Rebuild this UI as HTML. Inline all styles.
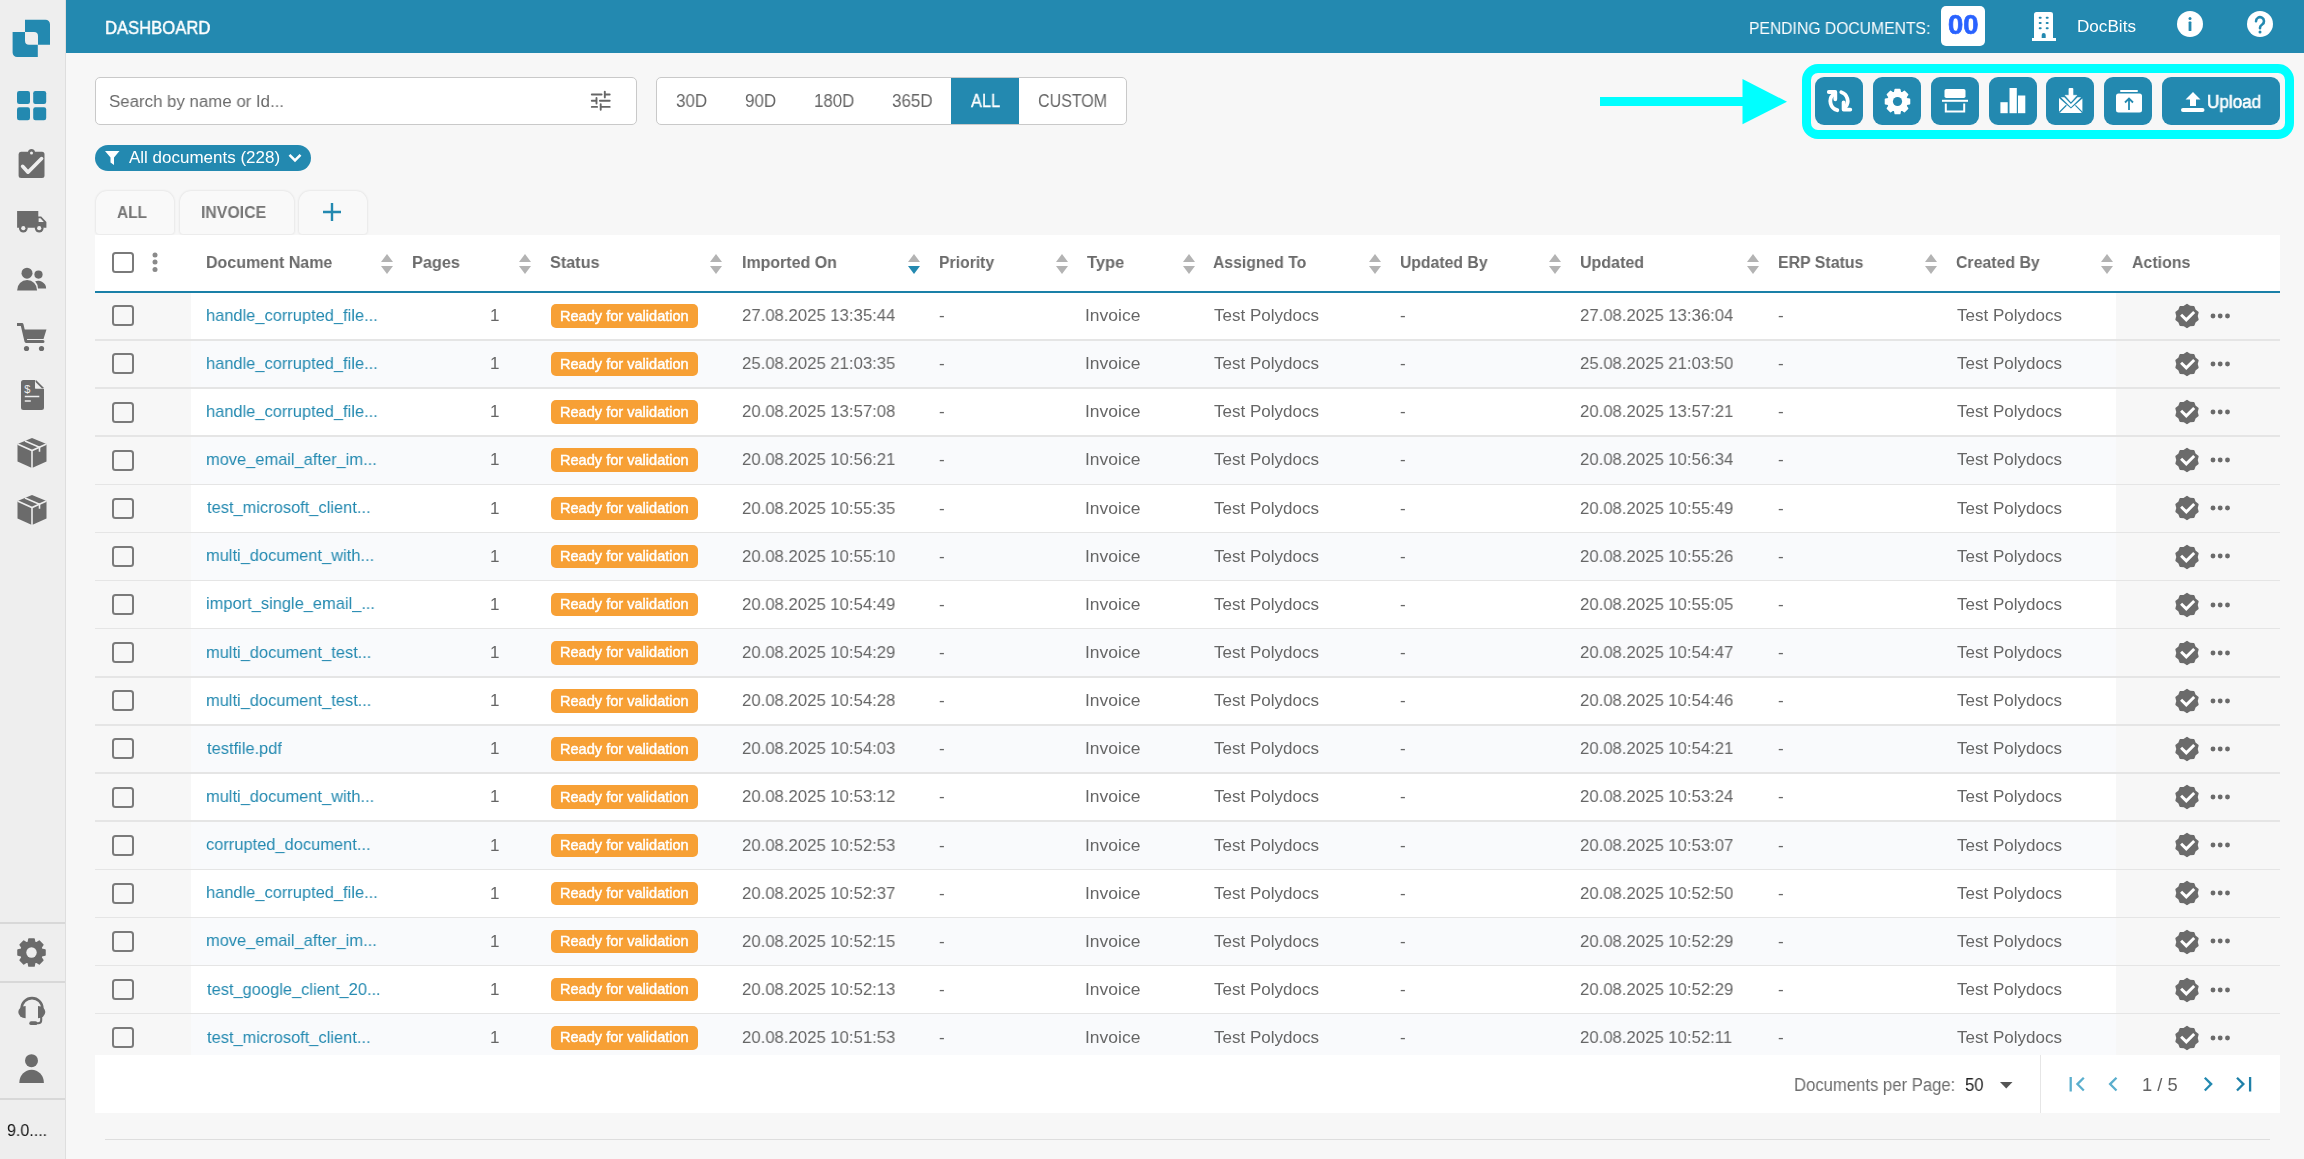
<!DOCTYPE html><html><head><meta charset="utf-8"><style>
*{box-sizing:border-box;margin:0;padding:0}
html,body{width:2304px;height:1159px;overflow:hidden;background:#f7f7f7;font-family:"Liberation Sans",sans-serif;color:#666666}
.a{position:absolute}
.t{position:absolute;white-space:nowrap;line-height:1;transform-origin:0 0;will-change:transform}
svg{position:absolute;display:block}
#side{left:0;top:0;width:66px;height:1159px;background:#eeeeee;border-right:1px solid #dedede}
.hr{left:0;width:65px;height:2px;background:#d8d8d8}
#hdr{left:66px;top:0;width:2238px;height:53px;background:#2389b0}
.box{background:#fff;border:1.5px solid #c9c9c9;border-radius:5px}
.seg{font-size:17px;color:#666666}
.tab{background:#f9f9f9;border-radius:11px 11px 3px 3px;box-shadow:0 0 2.5px rgba(0,0,0,0.14)}
.th{font-size:16.5px;font-weight:700;color:#666666}
.td{font-size:17px;color:#666666}
.lnk{font-size:17px;color:#2389b0}
.badge{background:#f7a035;border-radius:5px;height:23.5px;width:147px}
.bt{font-size:14.5px;font-weight:700;color:#fff;letter-spacing:-0.3px}
.cb{width:21.5px;height:21px;border:2px solid #7a7a7a;border-radius:3.5px}
.tb{background:#2389b0;border-radius:9px;height:48px}
</style></head><body>
<div id="side" class="a"></div>
<svg style="left:0;top:0" width="66" height="70" viewBox="0 0 66 70">
<path fill="#2389b0" d="M25 19.7h20.5a4.5 4.5 0 0 1 4.5 4.5V44.7H38V36a4 4 0 0 0-4-4H25z"/>
<path fill="#2389b0" d="M12.6 32H25v8.7a4 4 0 0 0 4 4h8.8V57H17.1a4.5 4.5 0 0 1-4.5-4.5z"/>
</svg>
<svg style="left:16.8px;top:91.1px" width="30" height="30" viewBox="0 0 30 30" fill="#2389b0">
<rect x="0" y="0" width="13" height="13" rx="2.2"/><rect x="16.2" y="0" width="13" height="13" rx="2.2"/>
<rect x="0" y="16.2" width="13" height="13" rx="2.2"/><rect x="16.2" y="16.2" width="13" height="13" rx="2.2"/></svg>
<svg style="left:18px;top:148px" width="28" height="32" viewBox="0 0 28 32" fill="#6b6b6b">
<path d="M3 3.7h7a3.6 3.6 0 0 1 7 0h7a2.5 2.5 0 0 1 2.5 2.5v21.3A2.5 2.5 0 0 1 24 30H3.1A2.5 2.5 0 0 1 .6 27.5V6.2A2.5 2.5 0 0 1 3 3.7z"/>
<circle cx="13.5" cy="5" r="1.5" fill="#eeeeee"/>
<path d="M4.6 18.3l5.4 5.9 13.6-13.6" stroke="#eeeeee" stroke-width="3.6" fill="none" stroke-linecap="round" stroke-linejoin="round"/></svg>
<svg style="left:16.8px;top:210px" width="30" height="24" viewBox="0 0 30 24" fill="#6b6b6b">
<path d="M0.1 1H21.3V6.4h2.9l5.2 5.6V17.8H0.1z"/>
<path d="M21.6 8.3v3.6h5.2l-3.3-3.6z" fill="#eeeeee"/>
<circle cx="6.3" cy="18.2" r="4.3"/><circle cx="22.2" cy="18.2" r="4.3"/>
<circle cx="6.3" cy="18.2" r="2.1" fill="#eeeeee"/><circle cx="22.2" cy="18.2" r="2.1" fill="#eeeeee"/></svg>
<svg style="left:16.8px;top:267px" width="30" height="25" viewBox="0 0 30 25" fill="#6b6b6b">
<circle cx="10" cy="6.2" r="5.5"/><path d="M0.1 23.4a10 10.3 0 0 1 20 0z"/>
<circle cx="21.5" cy="7.6" r="4.1"/><path d="M18.2 14.3a8 7.5 0 0 1 10.9 7.1H21a11.5 11.5 0 0 0-2.8-7.1z"/></svg>
<svg style="left:16.9px;top:323px" width="30" height="29" viewBox="0 0 30 29" fill="#6b6b6b">
<path d="M0 1.5h5l4 17h17" stroke="#6b6b6b" stroke-width="3" fill="none" stroke-linejoin="round" stroke-linecap="round"/>
<path d="M6.8 6.5h22.7l-3 9.5H9z"/>
<circle cx="9.5" cy="25.5" r="2.6"/><circle cx="24.5" cy="25.5" r="2.6"/></svg>
<svg style="left:20.5px;top:379.5px" width="23" height="30" viewBox="0 0 23 30" fill="#6b6b6b">
<path d="M2.5 0h11.5l9 9v18.5a2.5 2.5 0 0 1-2.5 2.5H2.5A2.5 2.5 0 0 1 0 27.5v-25A2.5 2.5 0 0 1 2.5 0z"/>
<path d="M14.5 0v8.5H23z" fill="#eeeeee"/><path d="M15 0l8 8h-8z" fill="#6b6b6b"/>
<path d="M14 1.5v7h7" fill="#eeeeee"/>
<path d="M3.8 16.5h14.5M3.8 21h6" stroke="#eeeeee" stroke-width="1.6"/>
<text x="3.3" y="12.5" font-size="11" font-family="Liberation Sans" fill="#eeeeee">$</text></svg>
<svg style="left:16.9px;top:437.5px" width="30" height="30" viewBox="0 0 30 30" fill="#6b6b6b">
<path d="M15 0l14.5 6v17.5L15 30 .5 23.5V6z"/>
<path d="M.5 6L15 12.5 29.5 6M15 12.5V30" stroke="#eeeeee" stroke-width="1.6" fill="none"/>
<path d="M8 3l14.5 6.3v4.5" stroke="#eeeeee" stroke-width="1.6" fill="none"/></svg>
<svg style="left:16.9px;top:495.3px" width="30" height="30" viewBox="0 0 30 30" fill="#6b6b6b">
<path d="M15 0l14.5 6v17.5L15 30 .5 23.5V6z"/>
<path d="M.5 6L15 12.5 29.5 6M15 12.5V30" stroke="#eeeeee" stroke-width="1.6" fill="none"/>
<path d="M8 3l14.5 6.3v4.5" stroke="#eeeeee" stroke-width="1.6" fill="none"/></svg>
<div class="a hr" style="top:921.5px"></div><div class="a hr" style="top:980.5px"></div><div class="a hr" style="top:1097.5px"></div>
<svg style="left:16px;top:936.5px" width="31" height="31" viewBox="0 0 31 31"><path fill="#6b6b6b" stroke="#6b6b6b" stroke-width="1.4" stroke-linejoin="round" d="M25.76 12.25 L29.05 12.89 L29.05 18.11 L25.76 18.75 L25.44 19.62 L25.05 20.46 L26.92 23.24 L23.24 26.92 L20.46 25.05 L19.62 25.44 L18.75 25.76 L18.11 29.05 L12.89 29.05 L12.25 25.76 L11.38 25.44 L10.54 25.05 L7.76 26.92 L4.08 23.24 L5.95 20.46 L5.56 19.62 L5.24 18.75 L1.95 18.11 L1.95 12.89 L5.24 12.25 L5.56 11.38 L5.95 10.54 L4.08 7.76 L7.76 4.08 L10.54 5.95 L11.38 5.56 L12.25 5.24 L12.89 1.95 L18.11 1.95 L18.75 5.24 L19.62 5.56 L20.46 5.95 L23.24 4.08 L26.92 7.76 L25.05 10.54 L25.44 11.38Z"/><circle cx="15.5" cy="15.5" r="5.2" fill="#eeeeee"/></svg>
<svg style="left:12px;top:990px" width="40" height="100" viewBox="12 990 40 100" fill="#6b6b6b">
<path d="M21.6 1008.5A10.4 10.4 0 0 1 42.4 1008.5V1010M21.6 1008.5V1010" stroke="#6b6b6b" stroke-width="2.6" fill="none"/>
<path d="M25.6 1006V1018.2A7.3 6.1 0 0 1 25.6 1006z"/>
<path d="M38 1006V1018.2A7.3 6.1 0 0 0 38 1006z"/>
<path d="M41.2 1016.5V1020.3Q41.2 1023.3 38.2 1023.3H35" stroke="#6b6b6b" stroke-width="2.1" fill="none"/>
<path d="M31.2 1023.2H35.5" stroke="#6b6b6b" stroke-width="3.8" stroke-linecap="round"/>
<circle cx="31.5" cy="1060.7" r="6.5"/>
<path d="M19.3 1083A12.3 13.3 0 0 1 43.9 1083z"/>
</svg>
<div class="t" style="left:6.94px;top:1122.80px;font-size:16.8px;font-weight:400;color:#111;transform:scaleX(0.9564);">9.0....</div>
<div id="hdr" class="a"></div>
<div class="t" style="left:105.10px;top:19.30px;font-size:18.4px;font-weight:400;color:#fff;transform:scaleX(0.9043);-webkit-text-stroke:0.45px #fff">DASHBOARD</div>
<div class="t" style="left:1748.75px;top:20.90px;font-size:16.6px;font-weight:400;color:#fff;transform:scaleX(0.9455);">PENDING DOCUMENTS:</div>
<div class="a" style="left:1941px;top:6px;width:44px;height:40px;background:#fff;border-radius:5px"></div>
<div class="t" style="left:1947.79px;top:11.60px;font-size:27px;font-weight:700;color:#2962ff;transform:scaleX(1.0143);-webkit-text-stroke:0.7px #2962ff">00</div>
<svg style="left:2032px;top:12px" width="24" height="29" viewBox="0 0 24 29" fill="#fff">
<path d="M4.5 0h14a2.5 2.5 0 0 1 2.5 2.5V26h3v3H0v-3h2V2.5A2.5 2.5 0 0 1 4.5 0z"/>
<g fill="#2389b0"><rect x="6.7" y="4.8" width="3" height="2" rx="1"/><rect x="13.7" y="4.8" width="3" height="2" rx="1"/>
<rect x="6.7" y="10" width="3" height="2" rx="1"/><rect x="13.7" y="10" width="3" height="2" rx="1"/>
<rect x="6.7" y="15.2" width="3" height="2" rx="1"/><rect x="13.7" y="15.2" width="3" height="2" rx="1"/>
<path d="M9.7 26v-3a2 2 0 0 1 4 0v3z"/></g></svg>
<div class="t" style="left:2077.48px;top:19.30px;font-size:16.8px;font-weight:400;color:#fff;transform:scaleX(1.0196);">DocBits</div>
<svg style="left:2177px;top:11px" width="26" height="26" viewBox="0 0 26 26"><circle cx="13" cy="13" r="13" fill="#fff"/>
<circle cx="13" cy="7.6" r="1.5" fill="#2389b0"/><rect x="11.6" y="10.6" width="2.8" height="9.4" rx="0.6" fill="#2389b0"/></svg>
<svg style="left:2246.5px;top:11px" width="26" height="26" viewBox="0 0 26 26"><circle cx="13" cy="13" r="13" fill="#fff"/>
<path d="M9 10.2a4 4 0 1 1 6.2 3.3c-1.2.8-2.2 1.6-2.2 3.2v.6" stroke="#2389b0" stroke-width="2.6" fill="none" stroke-linecap="round"/>
<circle cx="13" cy="21" r="1.5" fill="#2389b0"/></svg>
<div class="a box" style="left:95px;top:77px;width:542px;height:48px"></div>
<div class="t" style="left:109.03px;top:92.60px;font-size:17.3px;font-weight:400;color:#6a6a6a;transform:scaleX(0.9746);">Search by name or Id...</div>
<svg style="left:580px;top:85px" width="40" height="33" viewBox="580 85 40 33" fill="none" stroke="#666" stroke-width="1.9" stroke-linecap="round">
<path d="M591.8 94.5H601.6M604.8 91.6V97.4M604.8 94.5H609.7M591.8 100.7H596.4M596.5 97.9V103.6M599.9 100.7H609.7M591.8 106.9H597.1M600.7 104.2V109.7M600.7 106.9H609.7"/></svg>
<div class="a box" style="left:656px;top:77px;width:471px;height:48px"></div>
<div class="a" style="left:951px;top:78px;width:68px;height:46px;background:#2389b0"></div>
<div class="t" style="left:676.03px;top:93.30px;font-size:17.6px;font-weight:400;color:#666666;transform:scaleX(0.9667);">30D</div>
<div class="t" style="left:744.83px;top:93.30px;font-size:17.6px;font-weight:400;color:#666666;transform:scaleX(0.9667);">90D</div>
<div class="t" style="left:813.64px;top:93.30px;font-size:17.6px;font-weight:400;color:#666666;transform:scaleX(0.9600);">180D</div>
<div class="t" style="left:891.73px;top:93.30px;font-size:17.6px;font-weight:400;color:#666666;transform:scaleX(0.9675);">365D</div>
<div class="t" style="left:970.80px;top:93.30px;font-size:17.6px;font-weight:400;color:#fff;transform:scaleX(0.9323);-webkit-text-stroke:0.3px #fff">ALL</div>
<div class="t" style="left:1038.09px;top:93.30px;font-size:17.6px;font-weight:400;color:#666666;transform:scaleX(0.9095);">CUSTOM</div>
<div class="a" style="left:95px;top:144.5px;width:216px;height:26px;background:#2389b0;border-radius:13px"></div>
<svg style="left:104.5px;top:151px" width="15" height="14" viewBox="0 0 15 14" fill="#fff"><path d="M0 0h14.5L9 6.5V14L5.5 11.5V6.5z"/></svg>
<div class="t" style="left:129.20px;top:150.30px;font-size:16.6px;font-weight:400;color:#fff;transform:scaleX(1.0238);">All documents (228)</div>
<svg style="left:287.5px;top:153px" width="14" height="10" viewBox="0 0 14 10"><path d="M1.5 1.8l5.5 5.5 5.5-5.5" stroke="#fff" stroke-width="2.6" fill="none"/></svg>
<div class="a" style="left:1599.5px;top:97.3px;width:146px;height:9px;background:#00ffff"></div>
<svg style="left:1742px;top:79px" width="46" height="46" viewBox="0 0 46 46"><path d="M0.5 0L45 22.7 0.5 45.3z" fill="#00ffff"/></svg>
<div class="a" style="left:1802px;top:63.5px;width:492px;height:75.5px;border:9px solid #00ffff;border-radius:16px"></div>
<div class="a tb" style="left:1815.2px;top:77px;width:48px"></div>
<div class="a tb" style="left:1873px;top:77px;width:48px"></div>
<div class="a tb" style="left:1930.8px;top:77px;width:48px"></div>
<div class="a tb" style="left:1988.7px;top:77px;width:48px"></div>
<div class="a tb" style="left:2046.4px;top:77px;width:48px"></div>
<div class="a tb" style="left:2104px;top:77px;width:48px"></div>
<div class="a tb" style="left:2162px;top:77px;width:118px"></div>
<svg style="left:1815.2px;top:77px" width="48" height="48" viewBox="0 0 48 48" fill="none" stroke="#fff" stroke-width="3.8" stroke-linecap="round" stroke-linejoin="round">
<path d="M18.2 17.5A9.3 9.3 0 0 0 22.3 33.2"/><path d="M13.8 15H20.3V22.3"/>
<path d="M26.3 15.2A9.3 9.3 0 0 1 30.5 30"/><path d="M28.6 25.3V32.6H35.3"/></svg>
<svg style="left:1884px;top:87.5px" width="27" height="27" viewBox="0 0 27 27"><path fill="#fff" stroke="#fff" stroke-width="1.4" stroke-linejoin="round" d="M22.65 10.61 L25.58 11.18 L25.58 15.82 L22.65 16.39 L22.36 17.17 L22.01 17.92 L23.68 20.40 L20.40 23.68 L17.92 22.01 L17.17 22.36 L16.39 22.65 L15.82 25.58 L11.18 25.58 L10.61 22.65 L9.83 22.36 L9.08 22.01 L6.60 23.68 L3.32 20.40 L4.99 17.92 L4.64 17.17 L4.35 16.39 L1.42 15.82 L1.42 11.18 L4.35 10.61 L4.64 9.83 L4.99 9.08 L3.32 6.60 L6.60 3.32 L9.08 4.99 L9.83 4.64 L10.61 4.35 L11.18 1.42 L15.82 1.42 L16.39 4.35 L17.17 4.64 L17.92 4.99 L20.40 3.32 L23.68 6.60 L22.01 9.08 L22.36 9.83Z"/><circle cx="13.5" cy="13.5" r="4.6" fill="#2389b0"/></svg>
<svg style="left:1942px;top:89px" width="26" height="24" viewBox="0 0 26 24">
<rect x="2.5" y="0" width="21" height="9" rx="1.8" fill="#fff"/><rect x="0" y="10.8" width="26" height="2" fill="#fff"/>
<path d="M3.8 14.5v8h18.4v-8" stroke="#fff" stroke-width="2" fill="none"/></svg>
<svg style="left:2000px;top:88px" width="26" height="26" viewBox="0 0 26 26" fill="#fff">
<rect x="0.4" y="14.2" width="7.3" height="11" /><rect x="9.5" y="0" width="7.3" height="25.2"/><rect x="18" y="7.5" width="7.3" height="17.7"/></svg>
<svg style="left:2052px;top:84px" width="38" height="34" viewBox="0 0 38 34" fill="#fff">
<rect x="16.6" y="4.1" width="4.7" height="8" rx="1"/>
<path d="M13.1 11.3H24.8L18.95 17.9z" stroke="#fff" stroke-width="0.6" stroke-linejoin="round"/>
<path d="M8.8 13.2H12.3L18.95 19.95 25.6 13.2H29.1L18.95 23.3z"/>
<path d="M7 14.1L18.95 24.4 30.4 14.6V27.9L29 29H8.8L7 27.9z"/>
<path d="M14.4 21.3L7.4 28.2M23.4 21.3L30.2 28.2" stroke="#2389b0" stroke-width="1.2"/></svg>
<svg style="left:2115.5px;top:89.5px" width="26" height="23" viewBox="0 0 26 23">
<rect x="4" y="0" width="18" height="2" rx="1" fill="#fff"/><rect x="0" y="3.5" width="26" height="19" rx="2.5" fill="#fff"/>
<path d="M13 20V8.5M9 12.5l4-4 4 4" stroke="#2389b0" stroke-width="1.8" fill="none"/></svg>
<svg style="left:2180.5px;top:91.5px" width="24" height="20" viewBox="0 0 24 20" fill="#fff">
<path d="M12 0l7.5 7.5H15V14H9V7.5H4.5z"/><rect x="0" y="16" width="23.5" height="4" rx="2"/></svg>
<div class="t" style="left:2207.13px;top:94.20px;font-size:17.6px;font-weight:400;color:#fff;transform:scaleX(0.9704);-webkit-text-stroke:0.55px #fff">Upload</div>
<div class="a tab" style="left:95.5px;top:191.2px;width:78.5px;height:42.7px"></div>
<div class="a tab" style="left:179.5px;top:191.2px;width:114px;height:42.7px"></div>
<div class="a tab" style="left:298.5px;top:191.2px;width:68px;height:42.7px"></div>
<div class="t" style="left:117.37px;top:204.90px;font-size:16.6px;font-weight:700;color:#767676;transform:scaleX(0.9323);">ALL</div>
<div class="t" style="left:201.45px;top:204.90px;font-size:16.6px;font-weight:700;color:#767676;transform:scaleX(0.9537);">INVOICE</div>
<svg style="left:322px;top:202px" width="20" height="20" viewBox="0 0 20 20"><path d="M10 1v18M1 10h18" stroke="#2389b0" stroke-width="2.4"/></svg>
<div class="a" style="left:95px;top:235px;width:1185px;height:878px;background:#fff;border-radius:4px 4px 0 0"></div>
<div class="a" style="left:95px;top:235px;width:2185px;height:55.5px;background:#fff"></div>
<div class="a" style="left:95px;top:290.5px;width:2185px;height:2px;background:#1a80a8"></div>
<div class="a cb" style="left:112px;top:251.5px;background:#fff"></div>
<svg style="left:151px;top:251px" width="8" height="22" viewBox="0 0 8 22" fill="#8a8a8a"><circle cx="4" cy="4" r="2.5"/><circle cx="4" cy="11" r="2.5"/><circle cx="4" cy="18.5" r="2.5"/></svg>
<div class="t" style="left:206.05px;top:254.80px;font-size:16.8px;font-weight:700;color:#6a6a6a;transform:scaleX(0.9542);">Document Name</div>
<svg style="left:380px;top:253px" width="14" height="22" viewBox="0 0 14 22"><path d="M7 1L13 9H1z" fill="#b3b3b3"/><path d="M1 13H13L7 21z" fill="#b3b3b3"/></svg>
<div class="t" style="left:411.73px;top:254.80px;font-size:16.8px;font-weight:700;color:#6a6a6a;transform:scaleX(0.9708);">Pages</div>
<svg style="left:518px;top:253px" width="14" height="22" viewBox="0 0 14 22"><path d="M7 1L13 9H1z" fill="#b3b3b3"/><path d="M1 13H13L7 21z" fill="#b3b3b3"/></svg>
<div class="t" style="left:549.73px;top:254.80px;font-size:16.8px;font-weight:700;color:#6a6a6a;transform:scaleX(0.9660);">Status</div>
<svg style="left:709px;top:253px" width="14" height="22" viewBox="0 0 14 22"><path d="M7 1L13 9H1z" fill="#b3b3b3"/><path d="M1 13H13L7 21z" fill="#b3b3b3"/></svg>
<div class="t" style="left:741.55px;top:254.80px;font-size:16.8px;font-weight:700;color:#6a6a6a;transform:scaleX(0.9510);">Imported On</div>
<svg style="left:906.7px;top:253px" width="14" height="22" viewBox="0 0 14 22"><path d="M7 1L13 9H1z" fill="#b3b3b3"/><path d="M1 13H13L7 21z" fill="#2389b0"/></svg>
<div class="t" style="left:939.26px;top:254.80px;font-size:16.8px;font-weight:700;color:#6a6a6a;transform:scaleX(0.9379);">Priority</div>
<svg style="left:1054.9px;top:253px" width="14" height="22" viewBox="0 0 14 22"><path d="M7 1L13 9H1z" fill="#b3b3b3"/><path d="M1 13H13L7 21z" fill="#b3b3b3"/></svg>
<div class="t" style="left:1087.00px;top:254.80px;font-size:16.8px;font-weight:700;color:#6a6a6a;transform:scaleX(0.9838);">Type</div>
<svg style="left:1181.5px;top:253px" width="14" height="22" viewBox="0 0 14 22"><path d="M7 1L13 9H1z" fill="#b3b3b3"/><path d="M1 13H13L7 21z" fill="#b3b3b3"/></svg>
<div class="t" style="left:1213.16px;top:254.80px;font-size:16.8px;font-weight:700;color:#6a6a6a;transform:scaleX(0.9378);">Assigned To</div>
<svg style="left:1367.6px;top:253px" width="14" height="22" viewBox="0 0 14 22"><path d="M7 1L13 9H1z" fill="#b3b3b3"/><path d="M1 13H13L7 21z" fill="#b3b3b3"/></svg>
<div class="t" style="left:1399.56px;top:254.80px;font-size:16.8px;font-weight:700;color:#6a6a6a;transform:scaleX(0.9391);">Updated By</div>
<svg style="left:1548px;top:253px" width="14" height="22" viewBox="0 0 14 22"><path d="M7 1L13 9H1z" fill="#b3b3b3"/><path d="M1 13H13L7 21z" fill="#b3b3b3"/></svg>
<div class="t" style="left:1580.34px;top:254.80px;font-size:16.8px;font-weight:700;color:#6a6a6a;transform:scaleX(0.9554);">Updated</div>
<svg style="left:1745.8px;top:253px" width="14" height="22" viewBox="0 0 14 22"><path d="M7 1L13 9H1z" fill="#b3b3b3"/><path d="M1 13H13L7 21z" fill="#b3b3b3"/></svg>
<div class="t" style="left:1777.85px;top:254.80px;font-size:16.8px;font-weight:700;color:#6a6a6a;transform:scaleX(0.9477);">ERP Status</div>
<svg style="left:1924px;top:253px" width="14" height="22" viewBox="0 0 14 22"><path d="M7 1L13 9H1z" fill="#b3b3b3"/><path d="M1 13H13L7 21z" fill="#b3b3b3"/></svg>
<div class="t" style="left:1955.66px;top:254.80px;font-size:16.8px;font-weight:700;color:#6a6a6a;transform:scaleX(0.9448);">Created By</div>
<svg style="left:2099.5px;top:253px" width="14" height="22" viewBox="0 0 14 22"><path d="M7 1L13 9H1z" fill="#b3b3b3"/><path d="M1 13H13L7 21z" fill="#b3b3b3"/></svg>
<div class="t" style="left:2131.55px;top:254.80px;font-size:16.8px;font-weight:700;color:#6a6a6a;transform:scaleX(0.9483);">Actions</div>
<div class="a" style="left:95px;top:292.50px;width:2185px;height:48.13px;background:#ffffff"></div>
<div class="a" style="left:95px;top:292.50px;width:96px;height:48.13px;background:#f7f7f7"></div>
<div class="a" style="left:2116px;top:292.50px;width:164px;height:48.13px;background:#f7f7f7"></div>
<div class="a" style="left:95px;top:339px;width:2185px;height:2px;background:#e5e5e5"></div>
<div class="a cb" style="left:112px;top:305.30px"></div>
<div class="t" style="left:206.43px;top:306.70px;font-size:17px;font-weight:400;color:#2389b0;transform:scaleX(0.9669);">handle_corrupted_file...</div>
<div class="t" style="left:489.80px;top:307.10px;font-size:17px;font-weight:400;color:#666666;">1</div>
<div class="a badge" style="left:550.7px;top:304.10px"></div>
<div class="t" style="left:559.57px;top:308.50px;font-size:14.1px;font-weight:400;color:#fff;transform:scaleX(1.0333);-webkit-text-stroke:0.45px #fff">Ready for validation</div>
<div class="t" style="left:741.52px;top:307.10px;font-size:17px;font-weight:400;color:#666666;transform:scaleX(0.9832);">27.08.2025 13:35:44</div>
<div class="t" style="left:939.00px;top:307.10px;font-size:17px;font-weight:400;color:#666666;">-</div>
<div class="t" style="left:1084.95px;top:307.10px;font-size:17px;font-weight:400;color:#666666;transform:scaleX(1.0275);">Invoice</div>
<div class="t" style="left:1214.00px;top:307.10px;font-size:17px;font-weight:400;color:#666666;">Test Polydocs</div>
<div class="t" style="left:1399.50px;top:307.10px;font-size:17px;font-weight:400;color:#666666;">-</div>
<div class="t" style="left:1580.32px;top:307.10px;font-size:17px;font-weight:400;color:#666666;transform:scaleX(0.9832);">27.08.2025 13:36:04</div>
<div class="t" style="left:1777.80px;top:307.10px;font-size:17px;font-weight:400;color:#666666;">-</div>
<div class="t" style="left:1956.60px;top:307.10px;font-size:17px;font-weight:400;color:#666666;">Test Polydocs</div>
<svg style="left:2174px;top:302.90px" width="26" height="26" viewBox="0 0 26 26"><path fill="#6b6b6b" stroke="#6b6b6b" stroke-width="1.6" stroke-linejoin="round" d="M13.00 1.60 L16.06 3.58 L19.70 3.78 L21.01 7.18 L23.84 9.48 L22.90 13.00 L23.84 16.52 L21.01 18.82 L19.70 22.22 L16.06 22.42 L13.00 24.40 L9.94 22.42 L6.30 22.22 L4.99 18.82 L2.16 16.52 L3.10 13.00 L2.16 9.48 L4.99 7.18 L6.30 3.78 L9.94 3.58Z"/><path d="M7.1 11.7L12.3 16.9L20.2 9" stroke="#fff" stroke-width="2.9" fill="none"/></svg>
<svg style="left:2209.5px;top:312.80px" width="21" height="6" viewBox="0 0 21 6" fill="#6a6a6a"><circle cx="3" cy="3" r="2.45"/><circle cx="10.2" cy="3" r="2.45"/><circle cx="17.5" cy="3" r="2.45"/></svg>
<div class="a" style="left:95px;top:340.63px;width:2185px;height:48.13px;background:#f9fafc"></div>
<div class="a" style="left:95px;top:340.63px;width:96px;height:48.13px;background:#f7f7f7"></div>
<div class="a" style="left:2116px;top:340.63px;width:164px;height:48.13px;background:#f7f7f7"></div>
<div class="a" style="left:95px;top:387px;width:2185px;height:2px;background:#e5e5e5"></div>
<div class="a cb" style="left:112px;top:353.43px"></div>
<div class="t" style="left:206.43px;top:354.83px;font-size:17px;font-weight:400;color:#2389b0;transform:scaleX(0.9669);">handle_corrupted_file...</div>
<div class="t" style="left:489.80px;top:355.23px;font-size:17px;font-weight:400;color:#666666;">1</div>
<div class="a badge" style="left:550.7px;top:352.23px"></div>
<div class="t" style="left:559.57px;top:356.63px;font-size:14.1px;font-weight:400;color:#fff;transform:scaleX(1.0333);-webkit-text-stroke:0.45px #fff">Ready for validation</div>
<div class="t" style="left:741.52px;top:355.23px;font-size:17px;font-weight:400;color:#666666;transform:scaleX(0.9832);">25.08.2025 21:03:35</div>
<div class="t" style="left:939.00px;top:355.23px;font-size:17px;font-weight:400;color:#666666;">-</div>
<div class="t" style="left:1084.95px;top:355.23px;font-size:17px;font-weight:400;color:#666666;transform:scaleX(1.0275);">Invoice</div>
<div class="t" style="left:1214.00px;top:355.23px;font-size:17px;font-weight:400;color:#666666;">Test Polydocs</div>
<div class="t" style="left:1399.50px;top:355.23px;font-size:17px;font-weight:400;color:#666666;">-</div>
<div class="t" style="left:1580.32px;top:355.23px;font-size:17px;font-weight:400;color:#666666;transform:scaleX(0.9832);">25.08.2025 21:03:50</div>
<div class="t" style="left:1777.80px;top:355.23px;font-size:17px;font-weight:400;color:#666666;">-</div>
<div class="t" style="left:1956.60px;top:355.23px;font-size:17px;font-weight:400;color:#666666;">Test Polydocs</div>
<svg style="left:2174px;top:351.03px" width="26" height="26" viewBox="0 0 26 26"><path fill="#6b6b6b" stroke="#6b6b6b" stroke-width="1.6" stroke-linejoin="round" d="M13.00 1.60 L16.06 3.58 L19.70 3.78 L21.01 7.18 L23.84 9.48 L22.90 13.00 L23.84 16.52 L21.01 18.82 L19.70 22.22 L16.06 22.42 L13.00 24.40 L9.94 22.42 L6.30 22.22 L4.99 18.82 L2.16 16.52 L3.10 13.00 L2.16 9.48 L4.99 7.18 L6.30 3.78 L9.94 3.58Z"/><path d="M7.1 11.7L12.3 16.9L20.2 9" stroke="#fff" stroke-width="2.9" fill="none"/></svg>
<svg style="left:2209.5px;top:360.93px" width="21" height="6" viewBox="0 0 21 6" fill="#6a6a6a"><circle cx="3" cy="3" r="2.45"/><circle cx="10.2" cy="3" r="2.45"/><circle cx="17.5" cy="3" r="2.45"/></svg>
<div class="a" style="left:95px;top:388.76px;width:2185px;height:48.13px;background:#ffffff"></div>
<div class="a" style="left:95px;top:388.76px;width:96px;height:48.13px;background:#f7f7f7"></div>
<div class="a" style="left:2116px;top:388.76px;width:164px;height:48.13px;background:#f7f7f7"></div>
<div class="a" style="left:95px;top:435px;width:2185px;height:2px;background:#e5e5e5"></div>
<div class="a cb" style="left:112px;top:401.56px"></div>
<div class="t" style="left:206.43px;top:402.96px;font-size:17px;font-weight:400;color:#2389b0;transform:scaleX(0.9669);">handle_corrupted_file...</div>
<div class="t" style="left:489.80px;top:403.36px;font-size:17px;font-weight:400;color:#666666;">1</div>
<div class="a badge" style="left:550.7px;top:400.36px"></div>
<div class="t" style="left:559.57px;top:404.76px;font-size:14.1px;font-weight:400;color:#fff;transform:scaleX(1.0333);-webkit-text-stroke:0.45px #fff">Ready for validation</div>
<div class="t" style="left:741.52px;top:403.36px;font-size:17px;font-weight:400;color:#666666;transform:scaleX(0.9832);">20.08.2025 13:57:08</div>
<div class="t" style="left:939.00px;top:403.36px;font-size:17px;font-weight:400;color:#666666;">-</div>
<div class="t" style="left:1084.95px;top:403.36px;font-size:17px;font-weight:400;color:#666666;transform:scaleX(1.0275);">Invoice</div>
<div class="t" style="left:1214.00px;top:403.36px;font-size:17px;font-weight:400;color:#666666;">Test Polydocs</div>
<div class="t" style="left:1399.50px;top:403.36px;font-size:17px;font-weight:400;color:#666666;">-</div>
<div class="t" style="left:1580.32px;top:403.36px;font-size:17px;font-weight:400;color:#666666;transform:scaleX(0.9832);">20.08.2025 13:57:21</div>
<div class="t" style="left:1777.80px;top:403.36px;font-size:17px;font-weight:400;color:#666666;">-</div>
<div class="t" style="left:1956.60px;top:403.36px;font-size:17px;font-weight:400;color:#666666;">Test Polydocs</div>
<svg style="left:2174px;top:399.16px" width="26" height="26" viewBox="0 0 26 26"><path fill="#6b6b6b" stroke="#6b6b6b" stroke-width="1.6" stroke-linejoin="round" d="M13.00 1.60 L16.06 3.58 L19.70 3.78 L21.01 7.18 L23.84 9.48 L22.90 13.00 L23.84 16.52 L21.01 18.82 L19.70 22.22 L16.06 22.42 L13.00 24.40 L9.94 22.42 L6.30 22.22 L4.99 18.82 L2.16 16.52 L3.10 13.00 L2.16 9.48 L4.99 7.18 L6.30 3.78 L9.94 3.58Z"/><path d="M7.1 11.7L12.3 16.9L20.2 9" stroke="#fff" stroke-width="2.9" fill="none"/></svg>
<svg style="left:2209.5px;top:409.06px" width="21" height="6" viewBox="0 0 21 6" fill="#6a6a6a"><circle cx="3" cy="3" r="2.45"/><circle cx="10.2" cy="3" r="2.45"/><circle cx="17.5" cy="3" r="2.45"/></svg>
<div class="a" style="left:95px;top:436.89px;width:2185px;height:48.13px;background:#f9fafc"></div>
<div class="a" style="left:95px;top:436.89px;width:96px;height:48.13px;background:#f7f7f7"></div>
<div class="a" style="left:2116px;top:436.89px;width:164px;height:48.13px;background:#f7f7f7"></div>
<div class="a" style="left:95px;top:484px;width:2185px;height:2px;background:#e5e5e5"></div>
<div class="a cb" style="left:112px;top:449.69px"></div>
<div class="t" style="left:206.43px;top:451.09px;font-size:17px;font-weight:400;color:#2389b0;transform:scaleX(0.9669);">move_email_after_im...</div>
<div class="t" style="left:489.80px;top:451.49px;font-size:17px;font-weight:400;color:#666666;">1</div>
<div class="a badge" style="left:550.7px;top:448.49px"></div>
<div class="t" style="left:559.57px;top:452.89px;font-size:14.1px;font-weight:400;color:#fff;transform:scaleX(1.0333);-webkit-text-stroke:0.45px #fff">Ready for validation</div>
<div class="t" style="left:741.52px;top:451.49px;font-size:17px;font-weight:400;color:#666666;transform:scaleX(0.9832);">20.08.2025 10:56:21</div>
<div class="t" style="left:939.00px;top:451.49px;font-size:17px;font-weight:400;color:#666666;">-</div>
<div class="t" style="left:1084.95px;top:451.49px;font-size:17px;font-weight:400;color:#666666;transform:scaleX(1.0275);">Invoice</div>
<div class="t" style="left:1214.00px;top:451.49px;font-size:17px;font-weight:400;color:#666666;">Test Polydocs</div>
<div class="t" style="left:1399.50px;top:451.49px;font-size:17px;font-weight:400;color:#666666;">-</div>
<div class="t" style="left:1580.32px;top:451.49px;font-size:17px;font-weight:400;color:#666666;transform:scaleX(0.9832);">20.08.2025 10:56:34</div>
<div class="t" style="left:1777.80px;top:451.49px;font-size:17px;font-weight:400;color:#666666;">-</div>
<div class="t" style="left:1956.60px;top:451.49px;font-size:17px;font-weight:400;color:#666666;">Test Polydocs</div>
<svg style="left:2174px;top:447.29px" width="26" height="26" viewBox="0 0 26 26"><path fill="#6b6b6b" stroke="#6b6b6b" stroke-width="1.6" stroke-linejoin="round" d="M13.00 1.60 L16.06 3.58 L19.70 3.78 L21.01 7.18 L23.84 9.48 L22.90 13.00 L23.84 16.52 L21.01 18.82 L19.70 22.22 L16.06 22.42 L13.00 24.40 L9.94 22.42 L6.30 22.22 L4.99 18.82 L2.16 16.52 L3.10 13.00 L2.16 9.48 L4.99 7.18 L6.30 3.78 L9.94 3.58Z"/><path d="M7.1 11.7L12.3 16.9L20.2 9" stroke="#fff" stroke-width="2.9" fill="none"/></svg>
<svg style="left:2209.5px;top:457.19px" width="21" height="6" viewBox="0 0 21 6" fill="#6a6a6a"><circle cx="3" cy="3" r="2.45"/><circle cx="10.2" cy="3" r="2.45"/><circle cx="17.5" cy="3" r="2.45"/></svg>
<div class="a" style="left:95px;top:485.02px;width:2185px;height:48.13px;background:#ffffff"></div>
<div class="a" style="left:95px;top:485.02px;width:96px;height:48.13px;background:#f7f7f7"></div>
<div class="a" style="left:2116px;top:485.02px;width:164px;height:48.13px;background:#f7f7f7"></div>
<div class="a" style="left:95px;top:532px;width:2185px;height:2px;background:#e5e5e5"></div>
<div class="a cb" style="left:112px;top:497.82px"></div>
<div class="t" style="left:207.40px;top:499.22px;font-size:17px;font-weight:400;color:#2389b0;transform:scaleX(0.9669);">test_microsoft_client...</div>
<div class="t" style="left:489.80px;top:499.62px;font-size:17px;font-weight:400;color:#666666;">1</div>
<div class="a badge" style="left:550.7px;top:496.62px"></div>
<div class="t" style="left:559.57px;top:501.02px;font-size:14.1px;font-weight:400;color:#fff;transform:scaleX(1.0333);-webkit-text-stroke:0.45px #fff">Ready for validation</div>
<div class="t" style="left:741.52px;top:499.62px;font-size:17px;font-weight:400;color:#666666;transform:scaleX(0.9832);">20.08.2025 10:55:35</div>
<div class="t" style="left:939.00px;top:499.62px;font-size:17px;font-weight:400;color:#666666;">-</div>
<div class="t" style="left:1084.95px;top:499.62px;font-size:17px;font-weight:400;color:#666666;transform:scaleX(1.0275);">Invoice</div>
<div class="t" style="left:1214.00px;top:499.62px;font-size:17px;font-weight:400;color:#666666;">Test Polydocs</div>
<div class="t" style="left:1399.50px;top:499.62px;font-size:17px;font-weight:400;color:#666666;">-</div>
<div class="t" style="left:1580.32px;top:499.62px;font-size:17px;font-weight:400;color:#666666;transform:scaleX(0.9832);">20.08.2025 10:55:49</div>
<div class="t" style="left:1777.80px;top:499.62px;font-size:17px;font-weight:400;color:#666666;">-</div>
<div class="t" style="left:1956.60px;top:499.62px;font-size:17px;font-weight:400;color:#666666;">Test Polydocs</div>
<svg style="left:2174px;top:495.42px" width="26" height="26" viewBox="0 0 26 26"><path fill="#6b6b6b" stroke="#6b6b6b" stroke-width="1.6" stroke-linejoin="round" d="M13.00 1.60 L16.06 3.58 L19.70 3.78 L21.01 7.18 L23.84 9.48 L22.90 13.00 L23.84 16.52 L21.01 18.82 L19.70 22.22 L16.06 22.42 L13.00 24.40 L9.94 22.42 L6.30 22.22 L4.99 18.82 L2.16 16.52 L3.10 13.00 L2.16 9.48 L4.99 7.18 L6.30 3.78 L9.94 3.58Z"/><path d="M7.1 11.7L12.3 16.9L20.2 9" stroke="#fff" stroke-width="2.9" fill="none"/></svg>
<svg style="left:2209.5px;top:505.32px" width="21" height="6" viewBox="0 0 21 6" fill="#6a6a6a"><circle cx="3" cy="3" r="2.45"/><circle cx="10.2" cy="3" r="2.45"/><circle cx="17.5" cy="3" r="2.45"/></svg>
<div class="a" style="left:95px;top:533.15px;width:2185px;height:48.13px;background:#f9fafc"></div>
<div class="a" style="left:95px;top:533.15px;width:96px;height:48.13px;background:#f7f7f7"></div>
<div class="a" style="left:2116px;top:533.15px;width:164px;height:48.13px;background:#f7f7f7"></div>
<div class="a" style="left:95px;top:580px;width:2185px;height:2px;background:#e5e5e5"></div>
<div class="a cb" style="left:112px;top:545.95px"></div>
<div class="t" style="left:206.43px;top:547.35px;font-size:17px;font-weight:400;color:#2389b0;transform:scaleX(0.9669);">multi_document_with...</div>
<div class="t" style="left:489.80px;top:547.75px;font-size:17px;font-weight:400;color:#666666;">1</div>
<div class="a badge" style="left:550.7px;top:544.75px"></div>
<div class="t" style="left:559.57px;top:549.15px;font-size:14.1px;font-weight:400;color:#fff;transform:scaleX(1.0333);-webkit-text-stroke:0.45px #fff">Ready for validation</div>
<div class="t" style="left:741.52px;top:547.75px;font-size:17px;font-weight:400;color:#666666;transform:scaleX(0.9832);">20.08.2025 10:55:10</div>
<div class="t" style="left:939.00px;top:547.75px;font-size:17px;font-weight:400;color:#666666;">-</div>
<div class="t" style="left:1084.95px;top:547.75px;font-size:17px;font-weight:400;color:#666666;transform:scaleX(1.0275);">Invoice</div>
<div class="t" style="left:1214.00px;top:547.75px;font-size:17px;font-weight:400;color:#666666;">Test Polydocs</div>
<div class="t" style="left:1399.50px;top:547.75px;font-size:17px;font-weight:400;color:#666666;">-</div>
<div class="t" style="left:1580.32px;top:547.75px;font-size:17px;font-weight:400;color:#666666;transform:scaleX(0.9832);">20.08.2025 10:55:26</div>
<div class="t" style="left:1777.80px;top:547.75px;font-size:17px;font-weight:400;color:#666666;">-</div>
<div class="t" style="left:1956.60px;top:547.75px;font-size:17px;font-weight:400;color:#666666;">Test Polydocs</div>
<svg style="left:2174px;top:543.55px" width="26" height="26" viewBox="0 0 26 26"><path fill="#6b6b6b" stroke="#6b6b6b" stroke-width="1.6" stroke-linejoin="round" d="M13.00 1.60 L16.06 3.58 L19.70 3.78 L21.01 7.18 L23.84 9.48 L22.90 13.00 L23.84 16.52 L21.01 18.82 L19.70 22.22 L16.06 22.42 L13.00 24.40 L9.94 22.42 L6.30 22.22 L4.99 18.82 L2.16 16.52 L3.10 13.00 L2.16 9.48 L4.99 7.18 L6.30 3.78 L9.94 3.58Z"/><path d="M7.1 11.7L12.3 16.9L20.2 9" stroke="#fff" stroke-width="2.9" fill="none"/></svg>
<svg style="left:2209.5px;top:553.45px" width="21" height="6" viewBox="0 0 21 6" fill="#6a6a6a"><circle cx="3" cy="3" r="2.45"/><circle cx="10.2" cy="3" r="2.45"/><circle cx="17.5" cy="3" r="2.45"/></svg>
<div class="a" style="left:95px;top:581.28px;width:2185px;height:48.13px;background:#ffffff"></div>
<div class="a" style="left:95px;top:581.28px;width:96px;height:48.13px;background:#f7f7f7"></div>
<div class="a" style="left:2116px;top:581.28px;width:164px;height:48.13px;background:#f7f7f7"></div>
<div class="a" style="left:95px;top:628px;width:2185px;height:2px;background:#e5e5e5"></div>
<div class="a cb" style="left:112px;top:594.08px"></div>
<div class="t" style="left:206.43px;top:595.48px;font-size:17px;font-weight:400;color:#2389b0;transform:scaleX(0.9669);">import_single_email_...</div>
<div class="t" style="left:489.80px;top:595.88px;font-size:17px;font-weight:400;color:#666666;">1</div>
<div class="a badge" style="left:550.7px;top:592.88px"></div>
<div class="t" style="left:559.57px;top:597.28px;font-size:14.1px;font-weight:400;color:#fff;transform:scaleX(1.0333);-webkit-text-stroke:0.45px #fff">Ready for validation</div>
<div class="t" style="left:741.52px;top:595.88px;font-size:17px;font-weight:400;color:#666666;transform:scaleX(0.9832);">20.08.2025 10:54:49</div>
<div class="t" style="left:939.00px;top:595.88px;font-size:17px;font-weight:400;color:#666666;">-</div>
<div class="t" style="left:1084.95px;top:595.88px;font-size:17px;font-weight:400;color:#666666;transform:scaleX(1.0275);">Invoice</div>
<div class="t" style="left:1214.00px;top:595.88px;font-size:17px;font-weight:400;color:#666666;">Test Polydocs</div>
<div class="t" style="left:1399.50px;top:595.88px;font-size:17px;font-weight:400;color:#666666;">-</div>
<div class="t" style="left:1580.32px;top:595.88px;font-size:17px;font-weight:400;color:#666666;transform:scaleX(0.9832);">20.08.2025 10:55:05</div>
<div class="t" style="left:1777.80px;top:595.88px;font-size:17px;font-weight:400;color:#666666;">-</div>
<div class="t" style="left:1956.60px;top:595.88px;font-size:17px;font-weight:400;color:#666666;">Test Polydocs</div>
<svg style="left:2174px;top:591.68px" width="26" height="26" viewBox="0 0 26 26"><path fill="#6b6b6b" stroke="#6b6b6b" stroke-width="1.6" stroke-linejoin="round" d="M13.00 1.60 L16.06 3.58 L19.70 3.78 L21.01 7.18 L23.84 9.48 L22.90 13.00 L23.84 16.52 L21.01 18.82 L19.70 22.22 L16.06 22.42 L13.00 24.40 L9.94 22.42 L6.30 22.22 L4.99 18.82 L2.16 16.52 L3.10 13.00 L2.16 9.48 L4.99 7.18 L6.30 3.78 L9.94 3.58Z"/><path d="M7.1 11.7L12.3 16.9L20.2 9" stroke="#fff" stroke-width="2.9" fill="none"/></svg>
<svg style="left:2209.5px;top:601.58px" width="21" height="6" viewBox="0 0 21 6" fill="#6a6a6a"><circle cx="3" cy="3" r="2.45"/><circle cx="10.2" cy="3" r="2.45"/><circle cx="17.5" cy="3" r="2.45"/></svg>
<div class="a" style="left:95px;top:629.41px;width:2185px;height:48.13px;background:#f9fafc"></div>
<div class="a" style="left:95px;top:629.41px;width:96px;height:48.13px;background:#f7f7f7"></div>
<div class="a" style="left:2116px;top:629.41px;width:164px;height:48.13px;background:#f7f7f7"></div>
<div class="a" style="left:95px;top:676px;width:2185px;height:2px;background:#e5e5e5"></div>
<div class="a cb" style="left:112px;top:642.21px"></div>
<div class="t" style="left:206.43px;top:643.61px;font-size:17px;font-weight:400;color:#2389b0;transform:scaleX(0.9669);">multi_document_test...</div>
<div class="t" style="left:489.80px;top:644.01px;font-size:17px;font-weight:400;color:#666666;">1</div>
<div class="a badge" style="left:550.7px;top:641.01px"></div>
<div class="t" style="left:559.57px;top:645.41px;font-size:14.1px;font-weight:400;color:#fff;transform:scaleX(1.0333);-webkit-text-stroke:0.45px #fff">Ready for validation</div>
<div class="t" style="left:741.52px;top:644.01px;font-size:17px;font-weight:400;color:#666666;transform:scaleX(0.9832);">20.08.2025 10:54:29</div>
<div class="t" style="left:939.00px;top:644.01px;font-size:17px;font-weight:400;color:#666666;">-</div>
<div class="t" style="left:1084.95px;top:644.01px;font-size:17px;font-weight:400;color:#666666;transform:scaleX(1.0275);">Invoice</div>
<div class="t" style="left:1214.00px;top:644.01px;font-size:17px;font-weight:400;color:#666666;">Test Polydocs</div>
<div class="t" style="left:1399.50px;top:644.01px;font-size:17px;font-weight:400;color:#666666;">-</div>
<div class="t" style="left:1580.32px;top:644.01px;font-size:17px;font-weight:400;color:#666666;transform:scaleX(0.9832);">20.08.2025 10:54:47</div>
<div class="t" style="left:1777.80px;top:644.01px;font-size:17px;font-weight:400;color:#666666;">-</div>
<div class="t" style="left:1956.60px;top:644.01px;font-size:17px;font-weight:400;color:#666666;">Test Polydocs</div>
<svg style="left:2174px;top:639.81px" width="26" height="26" viewBox="0 0 26 26"><path fill="#6b6b6b" stroke="#6b6b6b" stroke-width="1.6" stroke-linejoin="round" d="M13.00 1.60 L16.06 3.58 L19.70 3.78 L21.01 7.18 L23.84 9.48 L22.90 13.00 L23.84 16.52 L21.01 18.82 L19.70 22.22 L16.06 22.42 L13.00 24.40 L9.94 22.42 L6.30 22.22 L4.99 18.82 L2.16 16.52 L3.10 13.00 L2.16 9.48 L4.99 7.18 L6.30 3.78 L9.94 3.58Z"/><path d="M7.1 11.7L12.3 16.9L20.2 9" stroke="#fff" stroke-width="2.9" fill="none"/></svg>
<svg style="left:2209.5px;top:649.71px" width="21" height="6" viewBox="0 0 21 6" fill="#6a6a6a"><circle cx="3" cy="3" r="2.45"/><circle cx="10.2" cy="3" r="2.45"/><circle cx="17.5" cy="3" r="2.45"/></svg>
<div class="a" style="left:95px;top:677.54px;width:2185px;height:48.13px;background:#ffffff"></div>
<div class="a" style="left:95px;top:677.54px;width:96px;height:48.13px;background:#f7f7f7"></div>
<div class="a" style="left:2116px;top:677.54px;width:164px;height:48.13px;background:#f7f7f7"></div>
<div class="a" style="left:95px;top:724px;width:2185px;height:2px;background:#e5e5e5"></div>
<div class="a cb" style="left:112px;top:690.34px"></div>
<div class="t" style="left:206.43px;top:691.74px;font-size:17px;font-weight:400;color:#2389b0;transform:scaleX(0.9669);">multi_document_test...</div>
<div class="t" style="left:489.80px;top:692.14px;font-size:17px;font-weight:400;color:#666666;">1</div>
<div class="a badge" style="left:550.7px;top:689.14px"></div>
<div class="t" style="left:559.57px;top:693.54px;font-size:14.1px;font-weight:400;color:#fff;transform:scaleX(1.0333);-webkit-text-stroke:0.45px #fff">Ready for validation</div>
<div class="t" style="left:741.52px;top:692.14px;font-size:17px;font-weight:400;color:#666666;transform:scaleX(0.9832);">20.08.2025 10:54:28</div>
<div class="t" style="left:939.00px;top:692.14px;font-size:17px;font-weight:400;color:#666666;">-</div>
<div class="t" style="left:1084.95px;top:692.14px;font-size:17px;font-weight:400;color:#666666;transform:scaleX(1.0275);">Invoice</div>
<div class="t" style="left:1214.00px;top:692.14px;font-size:17px;font-weight:400;color:#666666;">Test Polydocs</div>
<div class="t" style="left:1399.50px;top:692.14px;font-size:17px;font-weight:400;color:#666666;">-</div>
<div class="t" style="left:1580.32px;top:692.14px;font-size:17px;font-weight:400;color:#666666;transform:scaleX(0.9832);">20.08.2025 10:54:46</div>
<div class="t" style="left:1777.80px;top:692.14px;font-size:17px;font-weight:400;color:#666666;">-</div>
<div class="t" style="left:1956.60px;top:692.14px;font-size:17px;font-weight:400;color:#666666;">Test Polydocs</div>
<svg style="left:2174px;top:687.94px" width="26" height="26" viewBox="0 0 26 26"><path fill="#6b6b6b" stroke="#6b6b6b" stroke-width="1.6" stroke-linejoin="round" d="M13.00 1.60 L16.06 3.58 L19.70 3.78 L21.01 7.18 L23.84 9.48 L22.90 13.00 L23.84 16.52 L21.01 18.82 L19.70 22.22 L16.06 22.42 L13.00 24.40 L9.94 22.42 L6.30 22.22 L4.99 18.82 L2.16 16.52 L3.10 13.00 L2.16 9.48 L4.99 7.18 L6.30 3.78 L9.94 3.58Z"/><path d="M7.1 11.7L12.3 16.9L20.2 9" stroke="#fff" stroke-width="2.9" fill="none"/></svg>
<svg style="left:2209.5px;top:697.84px" width="21" height="6" viewBox="0 0 21 6" fill="#6a6a6a"><circle cx="3" cy="3" r="2.45"/><circle cx="10.2" cy="3" r="2.45"/><circle cx="17.5" cy="3" r="2.45"/></svg>
<div class="a" style="left:95px;top:725.67px;width:2185px;height:48.13px;background:#f9fafc"></div>
<div class="a" style="left:95px;top:725.67px;width:96px;height:48.13px;background:#f7f7f7"></div>
<div class="a" style="left:2116px;top:725.67px;width:164px;height:48.13px;background:#f7f7f7"></div>
<div class="a" style="left:95px;top:772px;width:2185px;height:2px;background:#e5e5e5"></div>
<div class="a cb" style="left:112px;top:738.47px"></div>
<div class="t" style="left:207.40px;top:739.87px;font-size:17px;font-weight:400;color:#2389b0;transform:scaleX(0.9669);">testfile.pdf</div>
<div class="t" style="left:489.80px;top:740.27px;font-size:17px;font-weight:400;color:#666666;">1</div>
<div class="a badge" style="left:550.7px;top:737.27px"></div>
<div class="t" style="left:559.57px;top:741.67px;font-size:14.1px;font-weight:400;color:#fff;transform:scaleX(1.0333);-webkit-text-stroke:0.45px #fff">Ready for validation</div>
<div class="t" style="left:741.52px;top:740.27px;font-size:17px;font-weight:400;color:#666666;transform:scaleX(0.9832);">20.08.2025 10:54:03</div>
<div class="t" style="left:939.00px;top:740.27px;font-size:17px;font-weight:400;color:#666666;">-</div>
<div class="t" style="left:1084.95px;top:740.27px;font-size:17px;font-weight:400;color:#666666;transform:scaleX(1.0275);">Invoice</div>
<div class="t" style="left:1214.00px;top:740.27px;font-size:17px;font-weight:400;color:#666666;">Test Polydocs</div>
<div class="t" style="left:1399.50px;top:740.27px;font-size:17px;font-weight:400;color:#666666;">-</div>
<div class="t" style="left:1580.32px;top:740.27px;font-size:17px;font-weight:400;color:#666666;transform:scaleX(0.9832);">20.08.2025 10:54:21</div>
<div class="t" style="left:1777.80px;top:740.27px;font-size:17px;font-weight:400;color:#666666;">-</div>
<div class="t" style="left:1956.60px;top:740.27px;font-size:17px;font-weight:400;color:#666666;">Test Polydocs</div>
<svg style="left:2174px;top:736.07px" width="26" height="26" viewBox="0 0 26 26"><path fill="#6b6b6b" stroke="#6b6b6b" stroke-width="1.6" stroke-linejoin="round" d="M13.00 1.60 L16.06 3.58 L19.70 3.78 L21.01 7.18 L23.84 9.48 L22.90 13.00 L23.84 16.52 L21.01 18.82 L19.70 22.22 L16.06 22.42 L13.00 24.40 L9.94 22.42 L6.30 22.22 L4.99 18.82 L2.16 16.52 L3.10 13.00 L2.16 9.48 L4.99 7.18 L6.30 3.78 L9.94 3.58Z"/><path d="M7.1 11.7L12.3 16.9L20.2 9" stroke="#fff" stroke-width="2.9" fill="none"/></svg>
<svg style="left:2209.5px;top:745.97px" width="21" height="6" viewBox="0 0 21 6" fill="#6a6a6a"><circle cx="3" cy="3" r="2.45"/><circle cx="10.2" cy="3" r="2.45"/><circle cx="17.5" cy="3" r="2.45"/></svg>
<div class="a" style="left:95px;top:773.80px;width:2185px;height:48.13px;background:#ffffff"></div>
<div class="a" style="left:95px;top:773.80px;width:96px;height:48.13px;background:#f7f7f7"></div>
<div class="a" style="left:2116px;top:773.80px;width:164px;height:48.13px;background:#f7f7f7"></div>
<div class="a" style="left:95px;top:820px;width:2185px;height:2px;background:#e5e5e5"></div>
<div class="a cb" style="left:112px;top:786.60px"></div>
<div class="t" style="left:206.43px;top:788.00px;font-size:17px;font-weight:400;color:#2389b0;transform:scaleX(0.9669);">multi_document_with...</div>
<div class="t" style="left:489.80px;top:788.40px;font-size:17px;font-weight:400;color:#666666;">1</div>
<div class="a badge" style="left:550.7px;top:785.40px"></div>
<div class="t" style="left:559.57px;top:789.80px;font-size:14.1px;font-weight:400;color:#fff;transform:scaleX(1.0333);-webkit-text-stroke:0.45px #fff">Ready for validation</div>
<div class="t" style="left:741.52px;top:788.40px;font-size:17px;font-weight:400;color:#666666;transform:scaleX(0.9832);">20.08.2025 10:53:12</div>
<div class="t" style="left:939.00px;top:788.40px;font-size:17px;font-weight:400;color:#666666;">-</div>
<div class="t" style="left:1084.95px;top:788.40px;font-size:17px;font-weight:400;color:#666666;transform:scaleX(1.0275);">Invoice</div>
<div class="t" style="left:1214.00px;top:788.40px;font-size:17px;font-weight:400;color:#666666;">Test Polydocs</div>
<div class="t" style="left:1399.50px;top:788.40px;font-size:17px;font-weight:400;color:#666666;">-</div>
<div class="t" style="left:1580.32px;top:788.40px;font-size:17px;font-weight:400;color:#666666;transform:scaleX(0.9832);">20.08.2025 10:53:24</div>
<div class="t" style="left:1777.80px;top:788.40px;font-size:17px;font-weight:400;color:#666666;">-</div>
<div class="t" style="left:1956.60px;top:788.40px;font-size:17px;font-weight:400;color:#666666;">Test Polydocs</div>
<svg style="left:2174px;top:784.20px" width="26" height="26" viewBox="0 0 26 26"><path fill="#6b6b6b" stroke="#6b6b6b" stroke-width="1.6" stroke-linejoin="round" d="M13.00 1.60 L16.06 3.58 L19.70 3.78 L21.01 7.18 L23.84 9.48 L22.90 13.00 L23.84 16.52 L21.01 18.82 L19.70 22.22 L16.06 22.42 L13.00 24.40 L9.94 22.42 L6.30 22.22 L4.99 18.82 L2.16 16.52 L3.10 13.00 L2.16 9.48 L4.99 7.18 L6.30 3.78 L9.94 3.58Z"/><path d="M7.1 11.7L12.3 16.9L20.2 9" stroke="#fff" stroke-width="2.9" fill="none"/></svg>
<svg style="left:2209.5px;top:794.10px" width="21" height="6" viewBox="0 0 21 6" fill="#6a6a6a"><circle cx="3" cy="3" r="2.45"/><circle cx="10.2" cy="3" r="2.45"/><circle cx="17.5" cy="3" r="2.45"/></svg>
<div class="a" style="left:95px;top:821.93px;width:2185px;height:48.13px;background:#f9fafc"></div>
<div class="a" style="left:95px;top:821.93px;width:96px;height:48.13px;background:#f7f7f7"></div>
<div class="a" style="left:2116px;top:821.93px;width:164px;height:48.13px;background:#f7f7f7"></div>
<div class="a" style="left:95px;top:869px;width:2185px;height:2px;background:#e5e5e5"></div>
<div class="a cb" style="left:112px;top:834.73px"></div>
<div class="t" style="left:206.43px;top:836.13px;font-size:17px;font-weight:400;color:#2389b0;transform:scaleX(0.9669);">corrupted_document...</div>
<div class="t" style="left:489.80px;top:836.53px;font-size:17px;font-weight:400;color:#666666;">1</div>
<div class="a badge" style="left:550.7px;top:833.53px"></div>
<div class="t" style="left:559.57px;top:837.93px;font-size:14.1px;font-weight:400;color:#fff;transform:scaleX(1.0333);-webkit-text-stroke:0.45px #fff">Ready for validation</div>
<div class="t" style="left:741.52px;top:836.53px;font-size:17px;font-weight:400;color:#666666;transform:scaleX(0.9832);">20.08.2025 10:52:53</div>
<div class="t" style="left:939.00px;top:836.53px;font-size:17px;font-weight:400;color:#666666;">-</div>
<div class="t" style="left:1084.95px;top:836.53px;font-size:17px;font-weight:400;color:#666666;transform:scaleX(1.0275);">Invoice</div>
<div class="t" style="left:1214.00px;top:836.53px;font-size:17px;font-weight:400;color:#666666;">Test Polydocs</div>
<div class="t" style="left:1399.50px;top:836.53px;font-size:17px;font-weight:400;color:#666666;">-</div>
<div class="t" style="left:1580.32px;top:836.53px;font-size:17px;font-weight:400;color:#666666;transform:scaleX(0.9832);">20.08.2025 10:53:07</div>
<div class="t" style="left:1777.80px;top:836.53px;font-size:17px;font-weight:400;color:#666666;">-</div>
<div class="t" style="left:1956.60px;top:836.53px;font-size:17px;font-weight:400;color:#666666;">Test Polydocs</div>
<svg style="left:2174px;top:832.33px" width="26" height="26" viewBox="0 0 26 26"><path fill="#6b6b6b" stroke="#6b6b6b" stroke-width="1.6" stroke-linejoin="round" d="M13.00 1.60 L16.06 3.58 L19.70 3.78 L21.01 7.18 L23.84 9.48 L22.90 13.00 L23.84 16.52 L21.01 18.82 L19.70 22.22 L16.06 22.42 L13.00 24.40 L9.94 22.42 L6.30 22.22 L4.99 18.82 L2.16 16.52 L3.10 13.00 L2.16 9.48 L4.99 7.18 L6.30 3.78 L9.94 3.58Z"/><path d="M7.1 11.7L12.3 16.9L20.2 9" stroke="#fff" stroke-width="2.9" fill="none"/></svg>
<svg style="left:2209.5px;top:842.23px" width="21" height="6" viewBox="0 0 21 6" fill="#6a6a6a"><circle cx="3" cy="3" r="2.45"/><circle cx="10.2" cy="3" r="2.45"/><circle cx="17.5" cy="3" r="2.45"/></svg>
<div class="a" style="left:95px;top:870.06px;width:2185px;height:48.13px;background:#ffffff"></div>
<div class="a" style="left:95px;top:870.06px;width:96px;height:48.13px;background:#f7f7f7"></div>
<div class="a" style="left:2116px;top:870.06px;width:164px;height:48.13px;background:#f7f7f7"></div>
<div class="a" style="left:95px;top:917px;width:2185px;height:2px;background:#e5e5e5"></div>
<div class="a cb" style="left:112px;top:882.86px"></div>
<div class="t" style="left:206.43px;top:884.26px;font-size:17px;font-weight:400;color:#2389b0;transform:scaleX(0.9669);">handle_corrupted_file...</div>
<div class="t" style="left:489.80px;top:884.66px;font-size:17px;font-weight:400;color:#666666;">1</div>
<div class="a badge" style="left:550.7px;top:881.66px"></div>
<div class="t" style="left:559.57px;top:886.06px;font-size:14.1px;font-weight:400;color:#fff;transform:scaleX(1.0333);-webkit-text-stroke:0.45px #fff">Ready for validation</div>
<div class="t" style="left:741.52px;top:884.66px;font-size:17px;font-weight:400;color:#666666;transform:scaleX(0.9832);">20.08.2025 10:52:37</div>
<div class="t" style="left:939.00px;top:884.66px;font-size:17px;font-weight:400;color:#666666;">-</div>
<div class="t" style="left:1084.95px;top:884.66px;font-size:17px;font-weight:400;color:#666666;transform:scaleX(1.0275);">Invoice</div>
<div class="t" style="left:1214.00px;top:884.66px;font-size:17px;font-weight:400;color:#666666;">Test Polydocs</div>
<div class="t" style="left:1399.50px;top:884.66px;font-size:17px;font-weight:400;color:#666666;">-</div>
<div class="t" style="left:1580.32px;top:884.66px;font-size:17px;font-weight:400;color:#666666;transform:scaleX(0.9832);">20.08.2025 10:52:50</div>
<div class="t" style="left:1777.80px;top:884.66px;font-size:17px;font-weight:400;color:#666666;">-</div>
<div class="t" style="left:1956.60px;top:884.66px;font-size:17px;font-weight:400;color:#666666;">Test Polydocs</div>
<svg style="left:2174px;top:880.46px" width="26" height="26" viewBox="0 0 26 26"><path fill="#6b6b6b" stroke="#6b6b6b" stroke-width="1.6" stroke-linejoin="round" d="M13.00 1.60 L16.06 3.58 L19.70 3.78 L21.01 7.18 L23.84 9.48 L22.90 13.00 L23.84 16.52 L21.01 18.82 L19.70 22.22 L16.06 22.42 L13.00 24.40 L9.94 22.42 L6.30 22.22 L4.99 18.82 L2.16 16.52 L3.10 13.00 L2.16 9.48 L4.99 7.18 L6.30 3.78 L9.94 3.58Z"/><path d="M7.1 11.7L12.3 16.9L20.2 9" stroke="#fff" stroke-width="2.9" fill="none"/></svg>
<svg style="left:2209.5px;top:890.36px" width="21" height="6" viewBox="0 0 21 6" fill="#6a6a6a"><circle cx="3" cy="3" r="2.45"/><circle cx="10.2" cy="3" r="2.45"/><circle cx="17.5" cy="3" r="2.45"/></svg>
<div class="a" style="left:95px;top:918.19px;width:2185px;height:48.13px;background:#f9fafc"></div>
<div class="a" style="left:95px;top:918.19px;width:96px;height:48.13px;background:#f7f7f7"></div>
<div class="a" style="left:2116px;top:918.19px;width:164px;height:48.13px;background:#f7f7f7"></div>
<div class="a" style="left:95px;top:965px;width:2185px;height:2px;background:#e5e5e5"></div>
<div class="a cb" style="left:112px;top:930.99px"></div>
<div class="t" style="left:206.43px;top:932.39px;font-size:17px;font-weight:400;color:#2389b0;transform:scaleX(0.9669);">move_email_after_im...</div>
<div class="t" style="left:489.80px;top:932.79px;font-size:17px;font-weight:400;color:#666666;">1</div>
<div class="a badge" style="left:550.7px;top:929.79px"></div>
<div class="t" style="left:559.57px;top:934.19px;font-size:14.1px;font-weight:400;color:#fff;transform:scaleX(1.0333);-webkit-text-stroke:0.45px #fff">Ready for validation</div>
<div class="t" style="left:741.52px;top:932.79px;font-size:17px;font-weight:400;color:#666666;transform:scaleX(0.9832);">20.08.2025 10:52:15</div>
<div class="t" style="left:939.00px;top:932.79px;font-size:17px;font-weight:400;color:#666666;">-</div>
<div class="t" style="left:1084.95px;top:932.79px;font-size:17px;font-weight:400;color:#666666;transform:scaleX(1.0275);">Invoice</div>
<div class="t" style="left:1214.00px;top:932.79px;font-size:17px;font-weight:400;color:#666666;">Test Polydocs</div>
<div class="t" style="left:1399.50px;top:932.79px;font-size:17px;font-weight:400;color:#666666;">-</div>
<div class="t" style="left:1580.32px;top:932.79px;font-size:17px;font-weight:400;color:#666666;transform:scaleX(0.9832);">20.08.2025 10:52:29</div>
<div class="t" style="left:1777.80px;top:932.79px;font-size:17px;font-weight:400;color:#666666;">-</div>
<div class="t" style="left:1956.60px;top:932.79px;font-size:17px;font-weight:400;color:#666666;">Test Polydocs</div>
<svg style="left:2174px;top:928.59px" width="26" height="26" viewBox="0 0 26 26"><path fill="#6b6b6b" stroke="#6b6b6b" stroke-width="1.6" stroke-linejoin="round" d="M13.00 1.60 L16.06 3.58 L19.70 3.78 L21.01 7.18 L23.84 9.48 L22.90 13.00 L23.84 16.52 L21.01 18.82 L19.70 22.22 L16.06 22.42 L13.00 24.40 L9.94 22.42 L6.30 22.22 L4.99 18.82 L2.16 16.52 L3.10 13.00 L2.16 9.48 L4.99 7.18 L6.30 3.78 L9.94 3.58Z"/><path d="M7.1 11.7L12.3 16.9L20.2 9" stroke="#fff" stroke-width="2.9" fill="none"/></svg>
<svg style="left:2209.5px;top:938.49px" width="21" height="6" viewBox="0 0 21 6" fill="#6a6a6a"><circle cx="3" cy="3" r="2.45"/><circle cx="10.2" cy="3" r="2.45"/><circle cx="17.5" cy="3" r="2.45"/></svg>
<div class="a" style="left:95px;top:966.32px;width:2185px;height:48.13px;background:#ffffff"></div>
<div class="a" style="left:95px;top:966.32px;width:96px;height:48.13px;background:#f7f7f7"></div>
<div class="a" style="left:2116px;top:966.32px;width:164px;height:48.13px;background:#f7f7f7"></div>
<div class="a" style="left:95px;top:1013px;width:2185px;height:2px;background:#e5e5e5"></div>
<div class="a cb" style="left:112px;top:979.12px"></div>
<div class="t" style="left:207.40px;top:980.52px;font-size:17px;font-weight:400;color:#2389b0;transform:scaleX(0.9669);">test_google_client_20...</div>
<div class="t" style="left:489.80px;top:980.92px;font-size:17px;font-weight:400;color:#666666;">1</div>
<div class="a badge" style="left:550.7px;top:977.92px"></div>
<div class="t" style="left:559.57px;top:982.32px;font-size:14.1px;font-weight:400;color:#fff;transform:scaleX(1.0333);-webkit-text-stroke:0.45px #fff">Ready for validation</div>
<div class="t" style="left:741.52px;top:980.92px;font-size:17px;font-weight:400;color:#666666;transform:scaleX(0.9832);">20.08.2025 10:52:13</div>
<div class="t" style="left:939.00px;top:980.92px;font-size:17px;font-weight:400;color:#666666;">-</div>
<div class="t" style="left:1084.95px;top:980.92px;font-size:17px;font-weight:400;color:#666666;transform:scaleX(1.0275);">Invoice</div>
<div class="t" style="left:1214.00px;top:980.92px;font-size:17px;font-weight:400;color:#666666;">Test Polydocs</div>
<div class="t" style="left:1399.50px;top:980.92px;font-size:17px;font-weight:400;color:#666666;">-</div>
<div class="t" style="left:1580.32px;top:980.92px;font-size:17px;font-weight:400;color:#666666;transform:scaleX(0.9832);">20.08.2025 10:52:29</div>
<div class="t" style="left:1777.80px;top:980.92px;font-size:17px;font-weight:400;color:#666666;">-</div>
<div class="t" style="left:1956.60px;top:980.92px;font-size:17px;font-weight:400;color:#666666;">Test Polydocs</div>
<svg style="left:2174px;top:976.72px" width="26" height="26" viewBox="0 0 26 26"><path fill="#6b6b6b" stroke="#6b6b6b" stroke-width="1.6" stroke-linejoin="round" d="M13.00 1.60 L16.06 3.58 L19.70 3.78 L21.01 7.18 L23.84 9.48 L22.90 13.00 L23.84 16.52 L21.01 18.82 L19.70 22.22 L16.06 22.42 L13.00 24.40 L9.94 22.42 L6.30 22.22 L4.99 18.82 L2.16 16.52 L3.10 13.00 L2.16 9.48 L4.99 7.18 L6.30 3.78 L9.94 3.58Z"/><path d="M7.1 11.7L12.3 16.9L20.2 9" stroke="#fff" stroke-width="2.9" fill="none"/></svg>
<svg style="left:2209.5px;top:986.62px" width="21" height="6" viewBox="0 0 21 6" fill="#6a6a6a"><circle cx="3" cy="3" r="2.45"/><circle cx="10.2" cy="3" r="2.45"/><circle cx="17.5" cy="3" r="2.45"/></svg>
<div class="a" style="left:95px;top:1014.45px;width:2185px;height:40.55px;background:#f9fafc"></div>
<div class="a" style="left:95px;top:1014.45px;width:96px;height:40.55px;background:#f7f7f7"></div>
<div class="a" style="left:2116px;top:1014.45px;width:164px;height:40.55px;background:#f7f7f7"></div>
<div class="a cb" style="left:112px;top:1027.25px"></div>
<div class="t" style="left:207.40px;top:1028.65px;font-size:17px;font-weight:400;color:#2389b0;transform:scaleX(0.9669);">test_microsoft_client...</div>
<div class="t" style="left:489.80px;top:1029.05px;font-size:17px;font-weight:400;color:#666666;">1</div>
<div class="a badge" style="left:550.7px;top:1026.05px"></div>
<div class="t" style="left:559.57px;top:1030.45px;font-size:14.1px;font-weight:400;color:#fff;transform:scaleX(1.0333);-webkit-text-stroke:0.45px #fff">Ready for validation</div>
<div class="t" style="left:741.52px;top:1029.05px;font-size:17px;font-weight:400;color:#666666;transform:scaleX(0.9832);">20.08.2025 10:51:53</div>
<div class="t" style="left:939.00px;top:1029.05px;font-size:17px;font-weight:400;color:#666666;">-</div>
<div class="t" style="left:1084.95px;top:1029.05px;font-size:17px;font-weight:400;color:#666666;transform:scaleX(1.0275);">Invoice</div>
<div class="t" style="left:1214.00px;top:1029.05px;font-size:17px;font-weight:400;color:#666666;">Test Polydocs</div>
<div class="t" style="left:1399.50px;top:1029.05px;font-size:17px;font-weight:400;color:#666666;">-</div>
<div class="t" style="left:1580.32px;top:1029.05px;font-size:17px;font-weight:400;color:#666666;transform:scaleX(0.9832);">20.08.2025 10:52:11</div>
<div class="t" style="left:1777.80px;top:1029.05px;font-size:17px;font-weight:400;color:#666666;">-</div>
<div class="t" style="left:1956.60px;top:1029.05px;font-size:17px;font-weight:400;color:#666666;">Test Polydocs</div>
<svg style="left:2174px;top:1024.85px" width="26" height="26" viewBox="0 0 26 26"><path fill="#6b6b6b" stroke="#6b6b6b" stroke-width="1.6" stroke-linejoin="round" d="M13.00 1.60 L16.06 3.58 L19.70 3.78 L21.01 7.18 L23.84 9.48 L22.90 13.00 L23.84 16.52 L21.01 18.82 L19.70 22.22 L16.06 22.42 L13.00 24.40 L9.94 22.42 L6.30 22.22 L4.99 18.82 L2.16 16.52 L3.10 13.00 L2.16 9.48 L4.99 7.18 L6.30 3.78 L9.94 3.58Z"/><path d="M7.1 11.7L12.3 16.9L20.2 9" stroke="#fff" stroke-width="2.9" fill="none"/></svg>
<svg style="left:2209.5px;top:1034.75px" width="21" height="6" viewBox="0 0 21 6" fill="#6a6a6a"><circle cx="3" cy="3" r="2.45"/><circle cx="10.2" cy="3" r="2.45"/><circle cx="17.5" cy="3" r="2.45"/></svg>
<div class="a" style="left:95px;top:1055px;width:2185px;height:58px;background:#fff"></div>
<div class="t" style="left:1794.25px;top:1077.00px;font-size:17.6px;font-weight:400;color:#6e6e6e;transform:scaleX(0.9476);">Documents per Page:</div>
<div class="t" style="left:1964.75px;top:1077.00px;font-size:17.6px;font-weight:400;color:#222;transform:scaleX(0.9500);">50</div>
<svg style="left:1999.5px;top:1081.5px" width="13" height="7" viewBox="0 0 13 7"><path d="M0 0h12.5L6.25 6.5z" fill="#555"/></svg>
<div class="a" style="left:2040px;top:1055px;width:1px;height:58px;background:#e6e6e6"></div>
<svg style="left:2066px;top:1075px" width="20" height="18" viewBox="0 0 20 18"><path d="M4.7 2.1v14.3M17.8 2.7l-6.4 6.4 6.4 6.4" stroke="#5aaecd" stroke-width="2.3" fill="none"/></svg>
<svg style="left:2105px;top:1075px" width="14" height="18" viewBox="0 0 14 18"><path d="M11.5 2.7l-6.4 6.4 6.4 6.4" stroke="#5aaecd" stroke-width="2.3" fill="none"/></svg>
<div class="t" style="left:2142.06px;top:1077.00px;font-size:17.6px;font-weight:400;color:#636363;transform:scaleX(1.0424);">1 / 5</div>
<svg style="left:2200px;top:1075px" width="14" height="18" viewBox="0 0 14 18"><path d="M4.8 2.7l6.4 6.4-6.4 6.4" stroke="#2389b0" stroke-width="2.3" fill="none"/></svg>
<svg style="left:2234px;top:1075px" width="20" height="18" viewBox="0 0 20 18"><path d="M3 2.7l6.4 6.4-6.4 6.4M16.1 2.1v14.3" stroke="#1f80a8" stroke-width="2.3" fill="none"/></svg>
<div class="a" style="left:105px;top:1138.5px;width:2165px;height:1.5px;background:#dedede"></div>
</body></html>
